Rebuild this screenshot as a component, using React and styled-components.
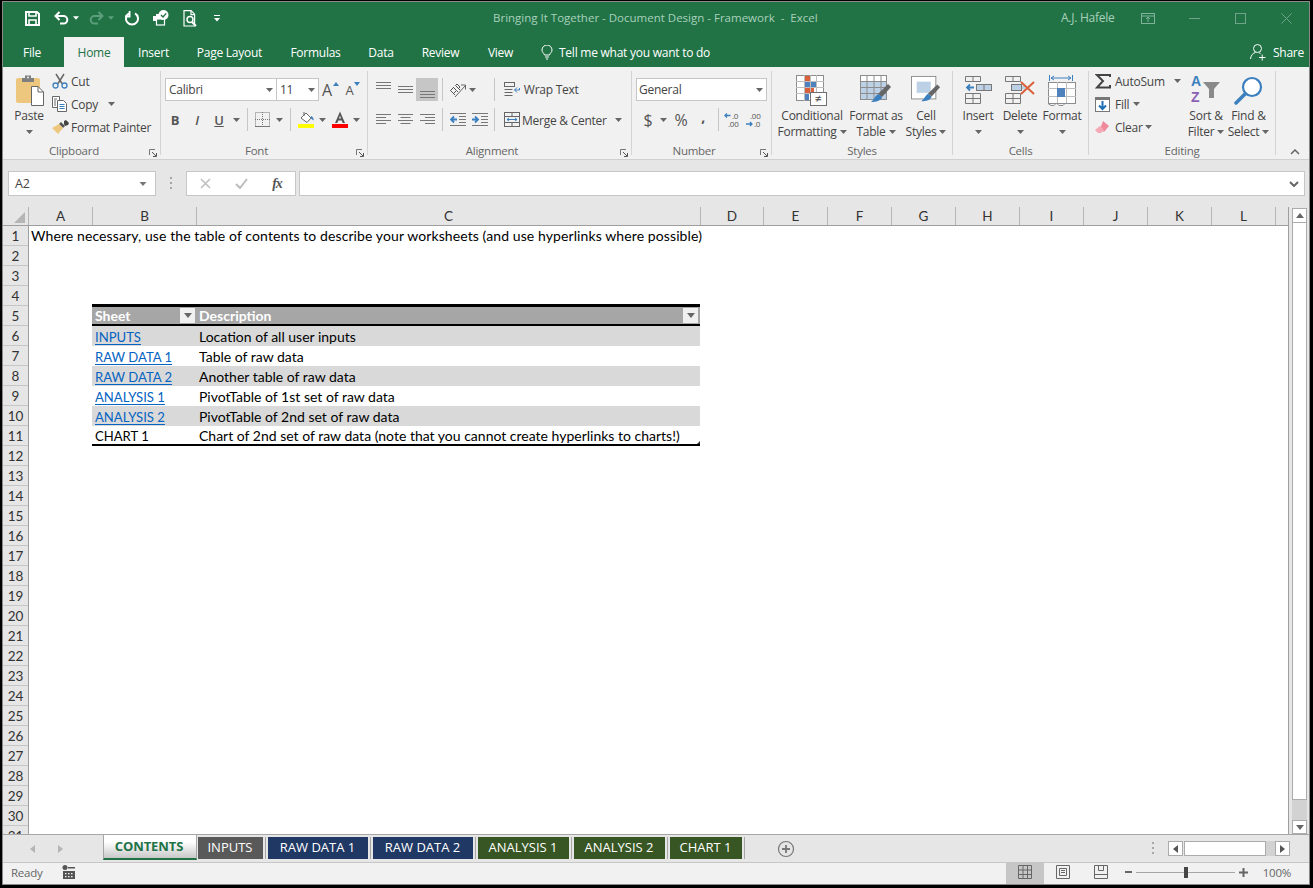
import React from 'react';
import styled, { createGlobalStyle } from 'styled-components';

const UI = '"Open Sans", "Noto Sans", sans-serif';
const CELL = 'Lato, "Open Sans", sans-serif';

const Global = createGlobalStyle`
  html, body { margin: 0; padding: 0; background: #000; }
  * { box-sizing: border-box; }
`;

const Screen = styled.div`
  width: 1313px; height: 888px; background: #000; padding: 1px 0 0 2px; overflow: hidden;
`;
const Window = styled.div`
  width: 1308px; height: 884px; border: 1px solid #8a8a8a; display: flex; flex-direction: column;
  background: #f1f1f1; font-family: ${UI}; font-size: 12px; letter-spacing: -0.25px; color: #444; overflow: hidden;
`;

/* title bar */
const TitleBar = styled.div`
  height: 36px; flex: none; background: #217346; display: flex; align-items: center; color: #a9d0bb; padding-bottom: 4px;
`;
const Qat = styled.div`
  width: 490px; display: flex; align-items: center; padding-left: 19px; height: 100%; flex: none;
`;
const QatSlot = styled.span`
  width: ${p => p.$w}px; margin-left: ${p => p.$ml || 0}px; display: flex; align-items: center; justify-content: center; flex: none;
`;
const DocTitle = styled.div`
  width: 568px; flex: none; white-space: nowrap; font-size: 11.5px; letter-spacing: 0; padding-bottom: 1px;
`;
const UserName = styled.span`
  padding-bottom: 1px;
`;
const WinSlot = styled.span`
  width: ${p => p.$w}px; margin-left: ${p => p.$ml || 0}px; flex: none; display: flex; align-items: center; justify-content: center;
`;

/* tabs */
const TabRow = styled.div`
  height: 29px; flex: none; background: #217346; display: flex; align-items: stretch; color: #fff;
`;
const RibbonTab = styled.div`
  width: ${p => p.$w}px; flex: none; display: flex; align-items: center; justify-content: center;
  padding-right: ${p => p.$pr || 0}px;
  ${p => p.$active ? 'background:#f1f1f1;color:#217346;margin-top:-1px;' : ''}
`;
const TellMe = styled.div`
  display: flex; align-items: center; gap: 6px; margin-left: 14px;
`;
const ShareBox = styled.div`
  margin-left: auto; display: flex; align-items: center; gap: 7px; padding-right: 5px;
`;

/* ribbon */
const Ribbon = styled.div`
  height: 93px; flex: none; padding: 4px 0 4px; border-bottom: 1px solid #d0d0d0; display: flex; background: #f1f1f1;
`;
const Group = styled.section`
  width: ${p => p.$w}px; flex: none; border-right: 1px solid #d4d4d4; display: flex; flex-direction: column;
`;
const GroupBody = styled.div`
  height: 73px; flex: none; display: flex; padding-left: ${p => p.$pl || 0}px;
  flex-direction: ${p => p.$col ? 'column' : 'row'}; padding-top: ${p => p.$pt || 0}px;
`;
const GroupFoot = styled.div`
  height: 11px; display: flex;
`;
const GroupLabel = styled.div`
  flex: 1; text-align: center; line-height: 14px; height: 14px; color: #666; font-size: 11.5px;
`;
const LaunchBox = styled.div`
  width: 15px; height: 14px; display: flex; align-items: center; padding: 3px 0 0 4px;
`;
const Row = styled.div`
  display: flex; align-items: center; flex: none; height: ${p => p.$h || 23}px; margin-top: ${p => p.$mt || 0}px;
  padding-left: ${p => p.$pl || 0}px;
`;
const Slot = styled.span`
  width: ${p => p.$w}px; height: 100%; margin-left: ${p => p.$ml || 0}px; flex: none; display: flex; align-items: center; justify-content: center;
  background: ${p => p.$on ? '#c6c6c6' : 'transparent'};
  font-size: ${p => p.$fs || 12}px;
  padding-bottom: ${p => p.$pb || 0}px;
  color: ${p => p.$dark ? '#555' : 'inherit'};
`;
const GrowBtn = styled.span`
  width: ${p => p.$w}px; height: 100%; margin-left: ${p => p.$ml || 0}px; flex: none; display: flex; align-items: center; justify-content: center; gap: 1px;
  font-size: ${p => p.$fs}px; color: #555;
`;
const GrowMark = styled.span`
  display: flex; align-self: flex-start; margin-top: 4px;
`;
const VSep = styled.span`
  width: 1px; height: 23px; flex: none; background: #c6c6c6; margin-left: ${p => p.$ml || 0}px;
`;
const Combo = styled.div`
  width: ${p => p.$w}px; height: 23px; flex: none; background: #fff; border: 1px solid #c6c6c6; display: flex; align-items: center;
`;
const ComboPart = styled.div`
  height: 100%; display: flex; align-items: center;
  ${p => p.$w ? `width:${p.$w}px; flex:none; border-right:1px solid #c6c6c6;` : 'flex:1;'}
`;
const ComboText = styled.div`
  flex: 1; padding-left: ${p => p.$pl ?? 3}px; white-space: nowrap; color: #444;
`;
const ComboCaret = styled.div`
  width: ${p => p.$w || 14}px; display: flex; justify-content: center; height: 100%; align-items: center; flex: none;
`;
const BigBtn = styled.div`
  width: ${p => p.$w}px; margin-left: ${p => p.$ml || 0}px; flex: none; display: flex; flex-direction: column; align-items: center;
`;
const BigIcon = styled.div`
  height: 37px; display: flex; align-items: center; justify-content: center; flex: none; padding: 1px 0 0 ${p => p.$pl || 0}px;
`;
const BigLine = styled.div`
  height: 16px; line-height: 16px; display: flex; align-items: center; gap: 3px; white-space: nowrap; flex: none;
`;
const SmallCol = styled.div`
  display: flex; flex-direction: column; gap: 1px; margin-left: ${p => p.$ml || 0}px; margin-top: -1px; width: ${p => p.$w ? p.$w + 'px' : 'auto'}; flex: none;
`;
const SmallBtn = styled.div`
  height: 22px; display: flex; align-items: center; white-space: nowrap;
`;
const SmallIcon = styled.span`
  width: ${p => p.$w || 19}px; flex: none; display: flex; align-items: center;
`;
const TextCol = styled.span`
  width: ${p => p.$w}px; flex: none; white-space: nowrap; padding-top: ${p => p.$pt || 0}px;
`;
const CollapseBox = styled.div`
  flex: 1; display: flex; align-items: flex-end; justify-content: center; padding-left: 5px;
`;

/* formula */
const FormulaBar = styled.div`
  height: 47px; flex: none; background: #e6e6e6; padding: 11px 0 0 5px; display: flex; align-items: flex-start;
`;
const NameBox = styled.div`
  width: 148px; height: 25px; background: #fff; border: 1px solid #c6c6c6; display: flex; align-items: center; font-size: 12.5px; padding-left: 6px;
`;
const NameText = styled.span`
  flex: 1;
`;
const Grip = styled.div`
  width: 30px; height: 25px; flex: none; display: flex; align-items: center; justify-content: center;
`;
const FxBox = styled.div`
  width: 110px; height: 25px; flex: none; background: #fff; border: 1px solid #c6c6c6; display: flex; align-items: center;
`;
const FxSlot = styled.span`
  width: 36px; flex: none; display: flex; justify-content: center; align-items: center;
  font-family: "Liberation Serif", serif; font-style: italic; font-weight: 700; font-size: 14px; color: #555; letter-spacing: -1px;
`;
const FormulaInput = styled.div`
  width: 1006px; height: 25px; flex: none; margin-left: 3px; background: #fff; border: 1px solid #c6c6c6; display: flex; align-items: center; justify-content: flex-end; padding-right: 5px;
`;

/* sheet */
const SheetArea = styled.div`
  height: 627px; flex: none; display: flex; background: #e6e6e6;
`;
const GridArea = styled.div`
  width: 1286px; flex: none; display: flex; flex-direction: column; border-right: 1px solid #9e9e9e;
`;
const ColHeadRow = styled.div`
  height: 19px; flex: none; display: flex; border-bottom: 1px solid #9e9e9e; font-family: ${CELL}; font-size: 13.5px; letter-spacing: 0; color: #333;
`;
const Corner = styled.div`
  width: 26px; flex: none; display: flex; align-items: flex-end; justify-content: flex-end; padding: 0 3px 2px 0; border-right: 1px solid #b5b5b5;
`;
const ColHead = styled.div`
  width: ${p => p.$w}px; flex: none; display: flex; align-items: center; justify-content: center; border-right: ${p => p.$last ? 'none' : '1px solid #b5b5b5'};
`;
const GridBody = styled.div`
  height: 608px; flex: none; display: flex; overflow: hidden; font-family: ${CELL}; letter-spacing: 0; color: #000;
`;
const RowHeads = styled.div`
  width: 26px; flex: none; display: flex; flex-direction: column; border-right: 1px solid #9e9e9e;
`;
const RowHead = styled.div`
  height: 20px; flex: none; border-bottom: 1px solid #c6c6c6; display: flex; align-items: center; justify-content: center; font-size: 13.5px; color: #333;
`;
const Cells = styled.div`
  flex: 1; background: #fff; display: flex; flex-direction: column;
`;
const IntroCell = styled.div`
  height: 20px; flex: none; padding-left: 2px; font-size: 14px; line-height: 20px; white-space: nowrap; letter-spacing: 0.1px;
`;
const Table = styled.div`
  width: 608px; margin: 58px 0 0 63px; position: relative; font-size: 14px; flex: none;
`;
const HeadRow = styled.div`
  height: 22px; border-top: 3px solid #000; border-bottom: 2px solid #000; background: #a6a6a6; display: flex; color: #fff; font-weight: 700;
`;
const BodyRow = styled.div`
  height: 20px; display: flex; background: ${p => p.$odd ? '#d9d9d9' : '#fff'};
  ${p => p.$last ? 'border-bottom: 2px solid #000;' : ''}
`;
const SheetCell = styled.div`
  width: 104px; flex: none; padding: ${p => p.$caps ? 1 : 0}px 0 0 3px; display: flex; align-items: center; white-space: nowrap; justify-content: space-between;
  font-size: ${p => p.$caps ? 13.1 : 14}px;
`;
const DescCell = styled.div`
  flex: 1; padding-left: 3px; display: flex; align-items: center; white-space: nowrap; justify-content: space-between;
`;
const HyperLink = styled.a`
  color: #0563c1; text-decoration: underline; text-decoration-thickness: 1px; text-underline-offset: 2px;
`;
const FilterBtn = styled.span`
  width: 15px; height: 15px; background: #f0f0f0; display: flex; align-items: center; justify-content: center; flex: none; margin-right: ${p => p.$mr || 1}px;
`;
const ResizeMark = styled.span`
  position: absolute; right: 0; bottom: 2px; width: 3px; height: 3px; display: flex;
`;

/* scrollbar */
const VScroll = styled.div`
  width: 20px; flex: none; padding: 1px 2px 0 3px; display: flex; flex-direction: column;
`;
const ScrollBtn = styled.div`
  width: 15px; height: ${p => p.$h || 15}px; flex: none; background: #fff; border: 1px solid #ababab; display: flex; align-items: center; justify-content: center;
`;
const VThumb = styled.div`
  width: 15px; height: 577px; flex: none; background: #fff; border: 1px solid #ababab; border-top: none;
`;
const VTrack = styled.div`
  width: 15px; height: 20px; flex: none; background: #d2d2d2;
`;

/* sheet tabs */
const TabBar = styled.div`
  height: 29px; flex: none; background: #e6e6e6; border-top: 1px solid #a6a6a6; border-bottom: 1px solid #c6c6c6; display: flex; align-items: flex-start;
`;
const NavArrows = styled.div`
  width: 100px; height: 27px; flex: none; display: flex; align-items: center; padding-left: 27px; gap: 23px;
`;
const ActiveTab = styled.div`
  width: 94px; height: 25px; flex: none; background: linear-gradient(#ffffff 30%, #c8c8c8); border-left: 1px solid #a6a6a6; border-right: 1px solid #a6a6a6; border-bottom: 2px solid #217346;
  color: #217346; font-weight: 700; display: flex; align-items: center; justify-content: center; font-size: 13px; letter-spacing: -0.1px; padding: 0 2px 1px 0;
`;
const SheetTab = styled.div`
  width: ${p => p.$w}px; height: 22px; flex: none; margin-top: 2px; margin-left: ${p => p.$ml}px; background: ${p => p.$c}; color: #fff; display: flex; align-items: center; justify-content: center; font-size: 13px; letter-spacing: 0; padding: 0 1px 2px 0;
`;
const TabSep = styled.span`
  width: 1px; height: 22px; margin: 2px 0 0 2px; flex: none; background: #a6a6a6;
`;
const AddSheet = styled.div`
  margin: 5px 0 0 32px; width: 18px; height: 18px; flex: none; display: flex;
`;
const HScrollWrap = styled.div`
  margin-left: auto; display: flex; align-items: center; height: 27px; padding-right: 19px;
`;
const HGrip = styled.div`
  width: 3px; display: flex; margin-right: 13px;
`;
const HBtn = styled.div`
  width: 15px; height: 15px; background: #fff; border: 1px solid #ababab; display: flex; align-items: center; justify-content: center; flex: none;
`;
const HThumb = styled.div`
  width: 82px; height: 15px; margin-left: 1px; background: #fff; border: 1px solid #ababab; flex: none;
`;
const HTrack = styled.div`
  width: 9px; height: 15px; background: #d2d2d2; flex: none;
`;

/* status */
const StatusBar = styled.div`
  flex: 1; background: #f1f1f1; display: flex; align-items: stretch; color: #666;
`;
const StatusLeft = styled.div`
  display: flex; align-items: center; padding: 0 0 3px 8px;
`;
const Ready = styled.span`
  width: 51px; font-size: 11.5px;
`;
const StatusRight = styled.div`
  margin-left: auto; display: flex; align-items: center; padding-right: 18px;
`;
const ViewBtn = styled.div`
  width: 38px; height: 100%; display: flex; align-items: center; justify-content: center; padding-bottom: 3px; background: ${p => p.$on ? '#c6c6c6' : 'transparent'};
`;
const ZoomGroup = styled.div`
  display: flex; align-items: center; height: 100%; padding: 0 0 3px 5px;
`;
const ZoomSlider = styled.div`
  width: 99px; height: 1px; background: #a6a6a6; margin: 0 4px; position: relative;
`;
const ZoomThumb = styled.span`
  position: absolute; left: 48px; top: -5px; width: 4px; height: 11px; background: #444;
`;
const ZoomPct = styled.span`
  margin-left: 15px; font-size: 11.5px;
`;

/* icons */
const Caret = ({ c = '#666', w = 7 }) => (
  <svg width={w} height="4" viewBox="0 0 7 4"><path d="M0 0h7L3.5 4z" fill={c} /></svg>
);
const SaveIcon = () => (
  <svg width="15" height="15" viewBox="0 0 15 15" fill="none" stroke="#fff" strokeWidth="2">
    <path d="M1 1h11l2 2v11H1z" /><path d="M4 1v4h7V1" strokeWidth="1.6" /><path d="M4 14V9h7v5" strokeWidth="1.6" />
  </svg>
);
const UndoIcon = ({ c = '#fff' }) => (
  <svg width="15" height="14" viewBox="0 0 15 14" fill="none" stroke={c} strokeWidth="2">
    <path d="M5.5 1 1.5 5l4 4" /><path d="M2 5h7.5a3.8 3.8 0 0 1 0 7.6H6" />
  </svg>
);
const RedoIcon = () => (
  <svg width="15" height="14" viewBox="0 0 15 14" fill="none" stroke="#5c9f7c" strokeWidth="2">
    <path d="M9.5 1l4 4-4 4" /><path d="M13 5H5.5a3.8 3.8 0 0 0 0 7.6H9" />
  </svg>
);
const RepeatIcon = () => (
  <svg width="15" height="15" viewBox="0 0 15 15" fill="none" stroke="#fff" strokeWidth="2">
    <path d="M5 2.4A6 6 0 1 0 11 2.4" /><path d="M5.6 0v5.5H1" strokeWidth="1.8" />
  </svg>
);
const PrintCheckIcon = () => (
  <svg width="17" height="16" viewBox="0 0 17 16">
    <path d="M1 6h3V4h6v9H4v-2H1z" fill="#fff" /><rect x="4.5" y="9" width="8" height="6" fill="#217346" stroke="#fff" strokeWidth="1.2" />
    <circle cx="11.5" cy="5" r="5" fill="#fff" /><path d="M9 5l2 2 3.2-3.6" stroke="#217346" strokeWidth="1.4" fill="none" />
  </svg>
);
const PreviewIcon = () => (
  <svg width="15" height="17" viewBox="0 0 15 17" fill="none" stroke="#fff" strokeWidth="1.2">
    <path d="M1 .6h7l3.6 3.6V16H1z" /><path d="M8 .6v4h3.6" /><circle cx="7" cy="9.5" r="3" strokeWidth="1.5" /><path d="M9 12l4 4" strokeWidth="2" />
  </svg>
);
const CustomizeIcon = () => (
  <svg width="7" height="7" viewBox="0 0 7 7"><path d="M0 0h6v1H0zM0 3h6L3 6.6z" fill="#fff" /></svg>
);
const BulbIcon = () => (
  <svg width="12" height="15" viewBox="0 0 12 15" fill="none" stroke="#fff" strokeWidth="1">
    <path d="M3.5 10C3 8 1 7.5 1 5a5 5 0 0 1 10 0c0 2.5-2 3-2.5 5z" /><path d="M4 12h4M5 14h2" />
  </svg>
);
const ShareIcon = () => (
  <svg width="16" height="17" viewBox="0 0 16 17" fill="none" stroke="#fff" strokeWidth="1">
    <circle cx="7.5" cy="4.5" r="4" /><path d="M.5 15c.3-3.5 2.5-6 5-6.500M9 8.800c.5.200 1 .4 1.500.8" /><path d="M9 13.500h6.500M12.200 10.500v6" />
  </svg>
);
const PinIcon = () => (
  <svg width="14" height="11" viewBox="0 0 14 11" fill="none" stroke="#7fb39a"><rect x=".5" y=".5" width="13" height="10" /><path d="M.5 3h13M7 9V4.500M5 6l2-2 2 2" /></svg>
);
const MinIcon = () => <svg width="11" height="1"><rect width="11" height="1" fill="#6ea58a" /></svg>;
const MaxIcon = () => <svg width="11" height="11" fill="none"><rect x=".5" y=".5" width="10" height="10" stroke="#6ea58a" /></svg>;
const CloseIcon = () => <svg width="11" height="11" fill="none" stroke="#6ea58a"><path d="M.5.5l10 10M10.500.5l-10 10" /></svg>;

const PasteIcon = () => (
  <svg width="28" height="33" viewBox="0 0 28 33">
    <rect x="0" y="4" width="24" height="25" rx="2" fill="#eec77e" />
    <path d="M6 4h3V1.500h6V4h3v4H6z" fill="#7f7f7f" /><circle cx="12" cy="3.500" r="1" fill="#eee" />
    <path d="M15.500 12.500h6.500l5.500 5.500v13.500H15.500z" fill="#fff" stroke="#666" /><path d="M22 12.500V18h5.500" fill="none" stroke="#666" />
  </svg>
);
const CutIcon = () => (
  <svg width="16" height="16" viewBox="0 0 16 16" fill="none">
    <path d="M4 1l6 9.500M12 1l-6 9.500" stroke="#666" strokeWidth="1.500" />
    <circle cx="3.500" cy="12.500" r="2.500" stroke="#3c7fbe" strokeWidth="1.300" /><circle cx="12.500" cy="12.500" r="2.500" stroke="#3c7fbe" strokeWidth="1.300" />
  </svg>
);
const CopyIcon = () => (
  <svg width="16" height="16" viewBox="0 0 16 16" fill="#fff" stroke="#666">
    <path d="M.5.500h7v11h-7z" /><path d="M5.500 4.500h6l3 3v8h-9z" />
    <path d="M2 3h3M2 5h2M2 7h2M2 9h2" /><path d="M7.500 8.500h5M7.500 10.500h5M7.500 12.500h5" stroke="#3c7fbe" />
  </svg>
);
const BrushIcon = () => (
  <svg width="17" height="15" viewBox="0 0 17 15">
    <path d="M9 2l4 4-2 2-4-4z" fill="#555" /><path d="M12 1l2-1 3 3-1 2-3 1-1-2z" fill="#444" />
    <path d="M7 4l4 4-5 6-6-6z" fill="#eec77e" />
  </svg>
);
const Launcher = () => (
  <svg width="8" height="8" viewBox="0 0 8 8" fill="none" stroke="#777"><path d="M.5 6V.5H6" /><path d="M3 3l4 4M7.500 4v3.500H4" stroke="#555" /></svg>
);
const GrowTri = ({ up }) => (
  <svg width="6" height="4" viewBox="0 0 6 4"><path d={up ? 'M0 4l3-4 3 4z' : 'M0 0h6L3 4z'} fill="#3c7fbe" /></svg>
);
const BordersIcon = () => (
  <svg width="15" height="15" viewBox="0 0 15 15" fill="none" stroke="#777" strokeDasharray="1 1"><rect x=".5" y=".5" width="14" height="14" /><path d="M7.500 0v15M0 7.500h15" /><path d="M0 14.500h15" strokeDasharray="none" /></svg>
);
const FillIcon = () => (
  <svg width="17" height="17" viewBox="0 0 17 17">
    <path d="M3 7l5-5 5 5-4 4.500z" fill="#fff" stroke="#666" /><path d="M6 1v4" stroke="#666" /><path d="M13 5c2 .5 3 3 2.500 4.500L13 7.500z" fill="#3c7fbe" />
    <rect x="0" y="13" width="16" height="4" fill="#ff0" />
  </svg>
);
const FontColorIcon = () => (
  <svg width="16" height="17" viewBox="0 0 16 17">
    <path d="M8 .5 3 12h2.300l1-2.600h3.400l1 2.600H13zM7 7.500l1-3 1 3z" fill="#555" fillRule="evenodd" /><rect y="13" width="16" height="4" fill="#f00" />
  </svg>
);
const Lines = ({ kind }) => {
  const rows = { top: [0, 3, 6], mid: [4, 7, 10], bot: [9, 12, 15] }[kind];
  return (
    <svg width="15" height="16" viewBox="0 0 15 16" fill="none" stroke="#777">
      {rows.map(y => <path key={y} d={`M0 ${y + .5}h15`} />)}
    </svg>
  );
};
const AlignIcon = ({ a }) => {
  const x = a === 'l' ? 0 : a === 'c' ? 2.5 : 5;
  return (
    <svg width="15" height="11" viewBox="0 0 15 11" fill="none" stroke="#777">
      <path d="M0 .5h15" /><path d={`M${x} 3.500h10`} /><path d="M0 6.500h15" /><path d={`M${x} 9.500h10`} />
    </svg>
  );
};
const OrientIcon = () => (
  <svg width="18" height="16" viewBox="0 0 18 16" fill="none">
    <path d="M1.500 8.500 5 5M3 10l3 3M6.500 3.500l4.500 4.500M8 9l1 1" stroke="#555" />
    <path d="M1.500 8.500l3 3 3-3-3-3zM6.500 3.500l1.500-1.500 3 3-1.500 1.500" stroke="#555" />
    <path d="M6 15 16 4M12 3h4.500v4.500" stroke="#666" />
  </svg>
);
const IndentIcon = ({ out }) => (
  <svg width="16" height="13" viewBox="0 0 16 13" fill="none">
    <path d="M0 .5h16M9 3.500h7M9 6.500h7M9 9.500h7M0 12.500h16" stroke="#777" />
    <path d={out ? 'M7 6.500H1M4 3.500 1 6.500l3 3' : 'M0 6.500h6M3 3.500l3 3-3 3'} stroke="#3c7fbe" strokeWidth="1.800" />
  </svg>
);
const WrapIcon = () => (
  <svg width="16" height="15" viewBox="0 0 16 15" fill="none" stroke="#666">
    <rect x=".5" y=".5" width="10" height="4" /><path d="M.5 7.500h8M.5 10.500h8M.5 13.500h8" /><path d="M15.500 6v2h-5M13 5.500l-2.500 2.500 2.500 2.500" stroke="#3c7fbe" />
  </svg>
);
const MergeIcon = () => (
  <svg width="16" height="15" viewBox="0 0 16 15" fill="none" stroke="#666">
    <rect x=".5" y=".5" width="15" height="14" /><path d="M.5 4.500h15M.5 10.500h15M8 .5v4M8 10.500v4" /><path d="M3 7.500h10M5 6 3 7.500 5 9M11 6l2 1.500L11 9" stroke="#3c7fbe" />
  </svg>
);
const DecIcon = ({ inc }) => (
  <svg width="20" height="17" viewBox="0 0 20 17">
    <text x={inc ? 9 : 5} y="7.500" fontFamily="Open Sans, sans-serif" fontSize="8" fill="#555">{inc ? '.0' : '.00'}</text>
    <text x={inc ? 5 : 9} y="16" fontFamily="Open Sans, sans-serif" fontSize="8" fill="#555">{inc ? '.00' : '.0'}</text>
    {inc
      ? <path d="M7.500 4.500H1.500M4 2.500l-2 2 2 2" stroke="#3c7fbe" strokeWidth="1.300" fill="none" />
      : <path d="M1 13h6M5 11l2 2-2 2" stroke="#3c7fbe" strokeWidth="1.300" fill="none" />}
  </svg>
);
const CondIcon = () => (
  <svg width="32" height="31" viewBox="0 0 32 31">
    <rect x=".5" y=".5" width="27" height="25" fill="#fff" stroke="#8c8c8c" />
    <rect x="8" y="1" width="6" height="5" fill="#d9603b" /><rect x="8" y="7" width="12" height="5" fill="#4f81bd" />
    <rect x="8" y="13" width="10" height="5" fill="#d9603b" /><rect x="8" y="19" width="5" height="6" fill="#4f81bd" />
    <path d="M8.500 0v26M14.500 0v26M20.500 0v26M0 6.500h28M0 12.500h28M0 18.500h28" stroke="#bdbdbd" fill="none" />
    <rect x="14.500" y="17.500" width="16" height="13" fill="#fff" stroke="#707070" />
    <text x="19" y="28" fontSize="12" fontFamily="Open Sans, sans-serif" fill="#444">≠</text>
  </svg>
);
const TableIcon = () => (
  <svg width="32" height="31" viewBox="0 0 32 31">
    <rect x=".5" y=".5" width="26" height="24" fill="#fff" stroke="#8c8c8c" />
    <rect x="1" y="7" width="25" height="17" fill="#bcd0e6" />
    <path d="M7 0v25M14 0v25M21 0v25M0 6.500h27M0 12.500h27M0 18.500h27" stroke="#8c8c8c" fill="none" />
    <path d="M28 9l3 3-9 10-4-3z" fill="#666" /><path d="M18 19l4 3c-1 4-6 5-11 5 3-2 4-6 7-8z" fill="#3c7fbe" />
  </svg>
);
const CellStyleIcon = () => (
  <svg width="30" height="31" viewBox="0 0 32 31">
    <rect x=".5" y=".5" width="26" height="24" fill="#fff" stroke="#8c8c8c" />
    <rect x="5.500" y="5.500" width="16" height="13" fill="#bcd0e6" stroke="#fff" />
    <path d="M28 9l3 3-9 10-4-3z" fill="#666" /><path d="M18 19l4 3c-1 4-6 5-11 5 3-2 4-6 7-8z" fill="#3c7fbe" />
  </svg>
);
const InsertIcon = () => (
  <svg width="27" height="28" viewBox="0 0 27 28" fill="none" stroke="#777">
    <path d="M.5.500h15v5H.5zM8 .5v5M.5 17.500h15v10H.5zM.5 22.500h15M8 17.500v10" />
    <rect x="11.500" y="8.500" width="15" height="6" fill="#bcd0e6" /><path d="M19 8.500v6" />
    <path d="M9 11.500H2M5 8.500l-3 3 3 3" stroke="#3c7fbe" strokeWidth="1.800" />
  </svg>
);
const DeleteIcon = () => (
  <svg width="31" height="28" viewBox="0 0 31 28" fill="none" stroke="#777">
    <path d="M.5.500h15v5H.5zM8 .5v5M.5 17.500h15v10H.5zM.5 22.500h15M8 17.500v10" />
    <rect x="6.500" y="8.500" width="10" height="6" fill="#bcd0e6" />
    <path d="M17 11.500l3 0" stroke="#bcd0e6" strokeWidth="4" />
    <path d="M16 6l13 12M29 6 16 18" stroke="#d9603b" strokeWidth="2" />
  </svg>
);
const FormatIcon = () => (
  <svg width="28" height="31" viewBox="0 0 28 31" fill="none">
    <path d="M1.500 0v6M24.500 0v6M3 3h20M6 1 3 3l3 2M20 1l3 2-3 2" stroke="#3c7fbe" />
    <rect x=".5" y="7.500" width="27" height="21" fill="#fff" stroke="#8c8c8c" />
    <path d="M9.500 7v21M18.500 7v21M0 13.500h28M0 21.500h28" stroke="#bdbdbd" />
    <rect x="9" y="13" width="8" height="9" fill="#4f81bd" />
    <path d="M9 28.500h8l-2 2h-4zM0 28.500h8l-2 2H3z" stroke="#8c8c8c" />
  </svg>
);
const SigmaIcon = () => (
  <svg width="16" height="15" viewBox="0 0 16 15" fill="none"><path d="M15 3V1H2l6 6-6 6.500h13V11" stroke="#444" strokeWidth="2" /></svg>
);
const FillDownIcon = () => (
  <svg width="15" height="15" viewBox="0 0 15 15" fill="none"><rect x=".5" y=".5" width="14" height="14" fill="#fff" stroke="#777" /><rect y="0" width="15" height="3" fill="#777" /><path d="M7.500 4v8M4 8.500l3.500 3.500L11 8.500" stroke="#1f6fb5" strokeWidth="2" /></svg>
);
const EraserIcon = () => (
  <svg width="14" height="13" viewBox="0 0 14 13"><path d="M8 0l6 5-5 6-4-3z" fill="#ee8a9a" /><path d="M5 5l4 4-3 3H3L0 9z" fill="#f3a8b4" /></svg>
);
const SortIcon = () => (
  <svg width="32" height="32" viewBox="0 0 32 32">
    <text x="1" y="12" fontFamily="Liberation Sans, sans-serif" fontWeight="700" fontSize="14" fill="#3c7fbe">A</text>
    <text x="1" y="28" fontFamily="Liberation Sans, sans-serif" fontWeight="700" fontSize="14" fill="#8b5fb5">Z</text>
    <path d="M13 8h17l-6 7v9h-5v-9z" fill="#8a8a8a" />
  </svg>
);
const FindIcon = () => (
  <svg width="29" height="29" viewBox="0 0 29 29" fill="none">
    <circle cx="18" cy="11" r="9" stroke="#3c7fbe" strokeWidth="2.200" fill="#fff" /><path d="M11 18 2 27" stroke="#3c7fbe" strokeWidth="3.500" strokeLinecap="round" />
  </svg>
);
const Up = () => <svg width="10" height="6" viewBox="0 0 10 6" fill="none" stroke="#666" strokeWidth="1.500"><path d="M1 5l4-4 4 4" /></svg>;
const Chevron = () => <svg width="10" height="6" viewBox="0 0 10 6" fill="none" stroke="#666" strokeWidth="2"><path d="M1 1l4 4 4-4" /></svg>;
const Dots = () => <svg width="3" height="13" viewBox="0 0 3 13" fill="#a6a6a6"><rect width="2" height="2" /><rect y="5" width="2" height="2" /><rect y="10" width="2" height="2" /></svg>;
const X = () => <svg width="11" height="11" fill="none" stroke="#bdbdbd" strokeWidth="1.500"><path d="M1 1l9 9M10 1l-9 9" /></svg>;
const Check = () => <svg width="13" height="11" fill="none" stroke="#bdbdbd" strokeWidth="2"><path d="M1 6l4 4 7-9" /></svg>;
const CornerTri = () => <svg width="11" height="11"><path d="M11 0v11H0z" fill="#b5b5b5" /></svg>;
const TriUp = () => <svg width="8" height="5"><path d="M4 0l4 5H0z" fill="#666" /></svg>;
const TriDown = () => <svg width="8" height="5"><path d="M0 0h8L4 5z" fill="#666" /></svg>;
const TriLeft = ({ c = '#666' }) => <svg width="5" height="8"><path d="M5 0v8L0 4z" fill={c} /></svg>;
const TriRight = ({ c = '#666' }) => <svg width="5" height="8"><path d="M0 0v8l5-4z" fill={c} /></svg>;
const AddIcon = () => (
  <svg width="18" height="18" viewBox="0 0 18 18" fill="none" stroke="#777"><circle cx="9" cy="9" r="7.500" strokeWidth="1.200" /><path d="M5 9h8M9 5v8" strokeWidth="1.800" /></svg>
);
const MacroIcon = () => (
  <svg width="13" height="14" viewBox="0 0 13 14" fill="#555">
    <circle cx="3" cy="2.500" r="2.500" /><path d="M6 2h7v1.500H6z" /><path d="M1 6h12v8H1z" /><path d="M3 8h1.500v1.200H3zM6 8h1.500v1.200H6zM9 8h1.500v1.200H9zM3 11h1.500v1.200H3zM6 11h1.500v1.200H6zM9 11h1.500v1.200H9z" fill="#f1f1f1" />
  </svg>
);
const NormalView = () => <svg width="14" height="14" fill="none" stroke="#666"><path d="M.5.500h13v13H.5zM.5 5h13M.5 9.500h13M5 .5v13M9.500 .5v13" /></svg>;
const LayoutView = () => <svg width="14" height="14" fill="none" stroke="#666"><path d="M.5.500h13v13H.5z" /><path d="M3.500 3.500h7v7h-7zM5 5.500h4M5 7.500h4" /></svg>;
const BreakView = () => <svg width="14" height="14" fill="none" stroke="#666"><path d="M.5.500h13v13H.5zM.5 9.500h13M4.500 .5v5h5v-5" /></svg>;
const Minus = () => <svg width="7" height="2"><rect width="7" height="2" fill="#666" /></svg>;
const Plus = () => <svg width="9" height="9"><path d="M0 3.500h9v2H0zM3.500 0h2v9h-2z" fill="#666" /></svg>;

const columns = [['A', 64], ['B', 104], ['C', 504], ['D', 63], ['E', 64], ['F', 64], ['G', 64], ['H', 64], ['I', 64], ['J', 64], ['K', 64], ['L', 64], ['', 13]];
const rowsData = [
  ['INPUTS', 'Location of all user inputs', true],
  ['RAW DATA 1', 'Table of raw data', true],
  ['RAW DATA 2', 'Another table of raw data', true],
  ['ANALYSIS 1', 'PivotTable of 1st set of raw data', true],
  ['ANALYSIS 2', 'PivotTable of 2nd set of raw data', true],
  ['CHART 1', 'Chart of 2nd set of raw data (note that you cannot create hyperlinks to charts!)', false],
];
const tabs = [
  ['INPUTS', 65, '#595959'], ['RAW DATA 1', 100, '#1f3864'], ['RAW DATA 2', 100, '#1f3864'],
  ['ANALYSIS 1', 91, '#375623'], ['ANALYSIS 2', 91, '#375623'], ['CHART 1', 72, '#375623'],
];
const ribbonTabs = [['Insert', 59], ['Page Layout', 93], ['Formulas', 79], ['Data', 52], ['Review', 67], ['View', 53]];

const Foot = ({ label, launcher }) => (
  <GroupFoot>
    <GroupLabel>{label}</GroupLabel>
    {launcher && <LaunchBox><Launcher /></LaunchBox>}
  </GroupFoot>
);

export default function App() {
  return (
    <Screen>
      <Global />
      <Window>
        <TitleBar>
          <Qat>
            <QatSlot $w={20}><SaveIcon /></QatSlot>
            <QatSlot $w={20} $ml={9}><UndoIcon /></QatSlot>
            <QatSlot $w={10}><Caret c="#fff" w={6} /></QatSlot>
            <QatSlot $w={20} $ml={5}><RedoIcon /></QatSlot>
            <QatSlot $w={10}><Caret c="#5c9f7c" w={6} /></QatSlot>
            <QatSlot $w={20} $ml={5}><RepeatIcon /></QatSlot>
            <QatSlot $w={20} $ml={9}><PrintCheckIcon /></QatSlot>
            <QatSlot $w={20} $ml={10}><PreviewIcon /></QatSlot>
            <QatSlot $w={10} $ml={12}><CustomizeIcon /></QatSlot>
          </Qat>
          <DocTitle>Bringing It Together - Document Design - Framework&nbsp; -&nbsp; Excel</DocTitle>
          <UserName>A.J. Hafele</UserName>
          <WinSlot $w={14} $ml={26}><PinIcon /></WinSlot>
          <WinSlot $w={11} $ml={34}><MinIcon /></WinSlot>
          <WinSlot $w={11} $ml={35}><MaxIcon /></WinSlot>
          <WinSlot $w={11} $ml={35}><CloseIcon /></WinSlot>
        </TitleBar>
        <TabRow>
          <RibbonTab $w={61} $pr={3}>File</RibbonTab>
          <RibbonTab $w={60} $active>Home</RibbonTab>
          {ribbonTabs.map(([t, w]) => <RibbonTab key={t} $w={w}>{t}</RibbonTab>)}
          <TellMe><BulbIcon />Tell me what you want to do</TellMe>
          <ShareBox><ShareIcon />Share</ShareBox>
        </TabRow>
        <Ribbon>
          <Group $w={158}>
            <GroupBody>
              <BigBtn $w={42} $ml={5}>
                <BigIcon $pl={1}><PasteIcon /></BigIcon>
                <BigLine>Paste</BigLine>
                <BigLine><Caret /></BigLine>
              </BigBtn>
              <SmallCol $ml={2}>
                <SmallBtn><SmallIcon><CutIcon /></SmallIcon>Cut</SmallBtn>
                <SmallBtn><SmallIcon><CopyIcon /></SmallIcon><TextCol $w={37}>Copy</TextCol><Caret /></SmallBtn>
                <SmallBtn><SmallIcon><BrushIcon /></SmallIcon>Format Painter</SmallBtn>
              </SmallCol>
            </GroupBody>
            <Foot label="Clipboard" launcher />
          </Group>
          <Group $w={207}>
            <GroupBody $col $pt={7}>
              <Row $pl={4}>
                <Combo $w={154}>
                  <ComboPart $w={111}>
                    <ComboText>Calibri</ComboText>
                    <ComboCaret $w={14}><Caret /></ComboCaret>
                  </ComboPart>
                  <ComboPart>
                    <ComboText>11</ComboText>
                    <ComboCaret $w={14}><Caret /></ComboCaret>
                  </ComboPart>
                </Combo>
                <GrowBtn $w={21} $ml={1} $fs={16}>A<GrowMark><GrowTri up /></GrowMark></GrowBtn>
                <GrowBtn $w={22} $ml={1} $fs={13}>A<GrowMark><GrowTri /></GrowMark></GrowBtn>
              </Row>
              <Row $mt={7} $pl={3}>
                <Slot $w={22} $fs={13} $dark><b>B</b></Slot>
                <Slot $w={22} $fs={13} $dark><i style={{ fontWeight: 600 }}>I</i></Slot>
                <Slot $w={22} $fs={13} $dark><u style={{ fontWeight: 600 }}>U</u></Slot>
                <Slot $w={12}><Caret /></Slot>
                <VSep $ml={5} />
                <Slot $w={20} $ml={4}><BordersIcon /></Slot>
                <Slot $w={14}><Caret /></Slot>
                <VSep $ml={4} />
                <Slot $w={20} $ml={5}><FillIcon /></Slot>
                <Slot $w={12}><Caret /></Slot>
                <Slot $w={20} $ml={2}><FontColorIcon /></Slot>
                <Slot $w={12}><Caret /></Slot>
              </Row>
            </GroupBody>
            <Foot label="Font" launcher />
          </Group>
          <Group $w={264}>
            <GroupBody $col $pt={7}>
              <Row $pl={4}>
                <Slot $w={22}><Lines kind="top" /></Slot>
                <Slot $w={22}><Lines kind="mid" /></Slot>
                <Slot $w={22} $on><Lines kind="bot" /></Slot>
                <VSep $ml={4} />
                <Slot $w={20} $ml={5}><OrientIcon /></Slot>
                <Slot $w={8}><Caret /></Slot>
                <VSep $ml={18} />
                <Slot $w={19} $ml={7}><WrapIcon /></Slot>
                <TextCol $w={60}>&nbsp;Wrap Text</TextCol>
              </Row>
              <Row $mt={7} $pl={4}>
                <Slot $w={22}><AlignIcon a="l" /></Slot>
                <Slot $w={22}><AlignIcon a="c" /></Slot>
                <Slot $w={22}><AlignIcon a="r" /></Slot>
                <VSep $ml={4} />
                <Slot $w={22} $ml={4}><IndentIcon out /></Slot>
                <Slot $w={22}><IndentIcon /></Slot>
                <VSep $ml={3} />
                <Slot $w={20} $ml={7}><MergeIcon /></Slot>
                <TextCol $w={89} $pt={1}>Merge &amp; Center</TextCol>
                <Slot $w={14}><Caret /></Slot>
              </Row>
            </GroupBody>
            <Foot label="Alignment" launcher />
          </Group>
          <Group $w={140}>
            <GroupBody $col $pt={7}>
              <Row $pl={4}>
                <Combo $w={131}>
                  <ComboText $pl={2}>General</ComboText>
                  <ComboCaret $w={14}><Caret /></ComboCaret>
                </Combo>
              </Row>
              <Row $mt={7} $pl={6}>
                <Slot $w={20} $fs={16} $dark>$</Slot>
                <Slot $w={10}><Caret /></Slot>
                <Slot $w={24} $ml={1} $fs={16} $dark>%</Slot>
                <Slot $w={20} $fs={14} $pb={7} $dark><b>,</b></Slot>
                <VSep $ml={5} />
                <Slot $w={22} $ml={3}><DecIcon inc /></Slot>
                <Slot $w={22}><DecIcon /></Slot>
              </Row>
            </GroupBody>
            <Foot label="Number" launcher />
          </Group>
          <Group $w={181}>
            <GroupBody $pl={4}>
              <BigBtn $w={72}>
                <BigIcon><CondIcon /></BigIcon>
                <BigLine>Conditional</BigLine>
                <BigLine>Formatting<Caret /></BigLine>
              </BigBtn>
              <BigBtn $w={52} $ml={2}>
                <BigIcon><TableIcon /></BigIcon>
                <BigLine>Format as</BigLine>
                <BigLine>Table<Caret /></BigLine>
              </BigBtn>
              <BigBtn $w={48}>
                <BigIcon><CellStyleIcon /></BigIcon>
                <BigLine>Cell</BigLine>
                <BigLine>Styles<Caret /></BigLine>
              </BigBtn>
            </GroupBody>
            <Foot label="Styles" />
          </Group>
          <Group $w={136}>
            <GroupBody $pl={4}>
              <BigBtn $w={42}>
                <BigIcon><InsertIcon /></BigIcon>
                <BigLine>Insert</BigLine>
                <BigLine><Caret /></BigLine>
              </BigBtn>
              <BigBtn $w={42}>
                <BigIcon><DeleteIcon /></BigIcon>
                <BigLine>Delete</BigLine>
                <BigLine><Caret /></BigLine>
              </BigBtn>
              <BigBtn $w={42}>
                <BigIcon><FormatIcon /></BigIcon>
                <BigLine>Format</BigLine>
                <BigLine><Caret /></BigLine>
              </BigBtn>
            </GroupBody>
            <Foot label="Cells" />
          </Group>
          <Group $w={187}>
            <GroupBody $pl={6}>
              <SmallCol $w={90}>
                <SmallBtn><SmallIcon $w={20}><SigmaIcon /></SmallIcon><TextCol $w={59}>AutoSum</TextCol><Caret /></SmallBtn>
                <SmallBtn><SmallIcon $w={20}><FillDownIcon /></SmallIcon><TextCol $w={18}>Fill</TextCol><Caret /></SmallBtn>
                <SmallBtn><SmallIcon $w={20}><EraserIcon /></SmallIcon><TextCol $w={30}>Clear</TextCol><Caret /></SmallBtn>
              </SmallCol>
              <BigBtn $w={42}>
                <BigIcon><SortIcon /></BigIcon>
                <BigLine>Sort &amp;</BigLine>
                <BigLine>Filter<Caret /></BigLine>
              </BigBtn>
              <BigBtn $w={43}>
                <BigIcon><FindIcon /></BigIcon>
                <BigLine>Find &amp;</BigLine>
                <BigLine>Select<Caret /></BigLine>
              </BigBtn>
            </GroupBody>
            <Foot label="Editing" />
          </Group>
          <CollapseBox><Up /></CollapseBox>
        </Ribbon>
        <FormulaBar>
          <NameBox><NameText>A2</NameText><ComboCaret $w={24}><Caret c="#777" w={8} /></ComboCaret></NameBox>
          <Grip><Dots /></Grip>
          <FxBox>
            <FxSlot><X /></FxSlot>
            <FxSlot><Check /></FxSlot>
            <FxSlot>fx</FxSlot>
          </FxBox>
          <FormulaInput><Chevron /></FormulaInput>
        </FormulaBar>
        <SheetArea>
          <GridArea>
            <ColHeadRow>
              <Corner><CornerTri /></Corner>
              {columns.map(([c, w]) => <ColHead key={c || 'end'} $w={w} $last={!c}>{c}</ColHead>)}
            </ColHeadRow>
            <GridBody>
              <RowHeads>
                {Array.from({ length: 31 }, (_, i) => <RowHead key={i}>{i + 1}</RowHead>)}
              </RowHeads>
              <Cells>
                <IntroCell>Where necessary, use the table of contents to describe your worksheets (and use hyperlinks where possible)</IntroCell>
                <Table>
                  <HeadRow>
                    <SheetCell>Sheet<FilterBtn><TriDown /></FilterBtn></SheetCell>
                    <DescCell>Description<FilterBtn $mr={2}><TriDown /></FilterBtn></DescCell>
                  </HeadRow>
                  {rowsData.map(([s, d, link], i) => (
                    <BodyRow key={s} $odd={i % 2 === 0} $last={i === rowsData.length - 1}>
                      <SheetCell $caps>{link ? <HyperLink>{s}</HyperLink> : s}</SheetCell>
                      <DescCell>{d}</DescCell>
                    </BodyRow>
                  ))}
                  <ResizeMark><svg width="3" height="3"><path d="M3 0v3H0z" fill="#333" /></svg></ResizeMark>
                </Table>
              </Cells>
            </GridBody>
          </GridArea>
          <VScroll>
            <ScrollBtn><TriUp /></ScrollBtn>
            <VThumb />
            <VTrack />
            <ScrollBtn $h={14}><TriDown /></ScrollBtn>
          </VScroll>
        </SheetArea>
        <TabBar>
          <NavArrows><TriLeft c="#b5b5b5" /><TriRight c="#b5b5b5" /></NavArrows>
          <ActiveTab>CONTENTS</ActiveTab>
          {tabs.map(([t, w, c], i) => (
            <React.Fragment key={t}>
              <SheetTab $w={w} $c={c} $ml={i === 0 ? 1 : 2}>{t}</SheetTab>
              <TabSep />
            </React.Fragment>
          ))}
          <AddSheet><AddIcon /></AddSheet>
          <HScrollWrap>
            <HGrip><Dots /></HGrip>
            <HBtn><TriLeft c="#555" /></HBtn>
            <HThumb />
            <HTrack />
            <HBtn><TriRight c="#555" /></HBtn>
          </HScrollWrap>
        </TabBar>
        <StatusBar>
          <StatusLeft>
            <Ready>Ready</Ready>
            <MacroIcon />
          </StatusLeft>
          <StatusRight>
            <ViewBtn $on><NormalView /></ViewBtn>
            <ViewBtn><LayoutView /></ViewBtn>
            <ViewBtn><BreakView /></ViewBtn>
            <ZoomGroup>
              <Minus />
              <ZoomSlider><ZoomThumb /></ZoomSlider>
              <Plus />
              <ZoomPct>100%</ZoomPct>
            </ZoomGroup>
          </StatusRight>
        </StatusBar>
      </Window>
    </Screen>
  );
}
